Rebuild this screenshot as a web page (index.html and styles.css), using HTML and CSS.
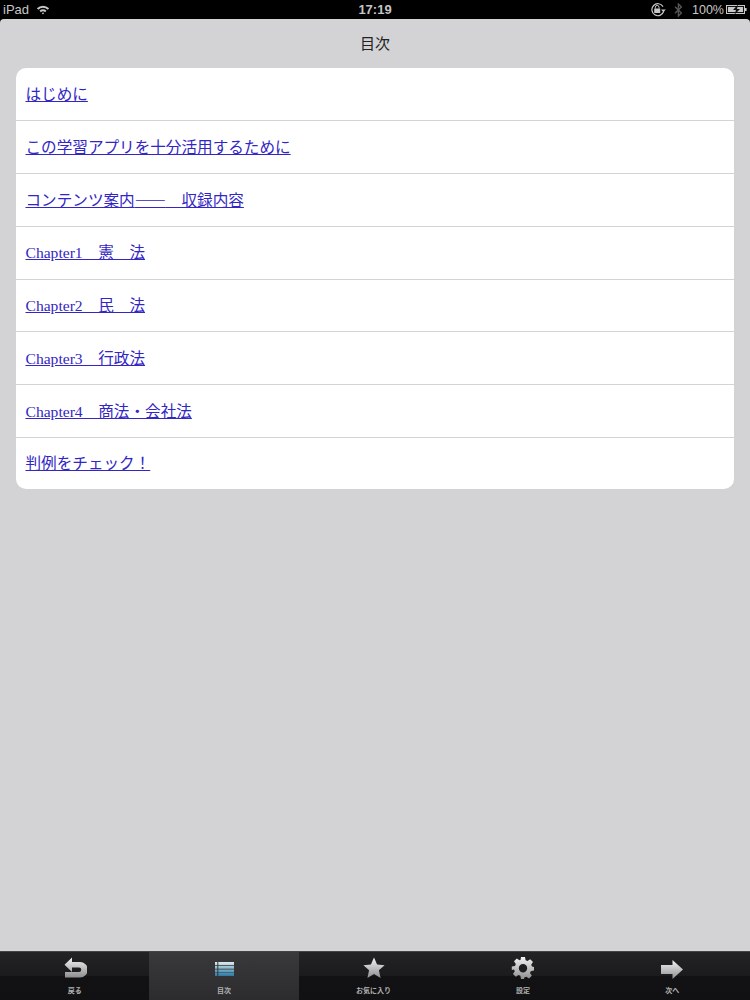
FILE: index.html
```html
<!DOCTYPE html>
<html lang="ja">
<head>
    <meta charset="UTF-8">
    <title>目次</title>
    <link rel="stylesheet" href="styles.css">
</head>
<body>
    <div class="status-bar">
        <div class="status-left">
            <span>iPad</span>
            <svg class="wifi" width="14" height="11" viewBox="0 0 16 12">
                <path d="M1 4.5 A10 10 0 0 1 15 4.5 L13.4 6.2 A7.8 7.8 0 0 0 2.6 6.2 Z" fill="#c8c8c8"/>
                <path d="M4 7.4 A5.8 5.8 0 0 1 12 7.4 L10.4 9 A3.6 3.6 0 0 0 5.6 9 Z" fill="#c8c8c8"/>
                <path d="M6.6 10 A2 2 0 0 1 9.4 10 L8 11.6 Z" fill="#c8c8c8"/>
            </svg>
        </div>
        <div class="status-time">17:19</div>
        <div class="status-right">
            <svg class="lock" width="16" height="15" viewBox="0 0 16 15">
                <path d="M13.6 9.5 A6 6 0 1 1 13 4.6" fill="none" stroke="#c8c8c8" stroke-width="1.2"/>
                <path d="M11 7.5 L15.8 7.5 L13.4 10.2 Z" fill="#c8c8c8"/>
                <rect x="4.2" y="6.5" width="6" height="4.5" fill="#c8c8c8"/>
                <path d="M5.4 6.5 V5.2 A1.8 1.8 0 0 1 9 5.2 V6.5" fill="none" stroke="#c8c8c8" stroke-width="1"/>
            </svg>
            <svg class="bluetooth" width="9" height="14" viewBox="0 0 9 14">
                <path d="M1 3.8 L7.4 10 L4.4 13 V1 L7.4 4 L1 10.2" fill="none" stroke="#555" stroke-width="1.4"/>
            </svg>
            <span class="battery-text">100%</span>
            <svg width="21" height="11" viewBox="0 0 21 11">
                <rect x="0.5" y="1.5" width="18" height="8" fill="#111" stroke="#c8c8c8"/>
                <rect x="2" y="3" width="15" height="5" fill="#c8c8c8"/>
                <path d="M12 0.5 L7 6 H10 L8.5 10.5 L14 5 H11 Z" fill="#111"/>
                <rect x="19" y="4" width="1.6" height="3" fill="#c8c8c8"/>
            </svg>
        </div>
    </div>

    <div class="content">
        <h1 class="title">目次</h1>
        <ul class="toc">
            <li><a href="#">はじめに</a></li>
            <li><a href="#">この学習アプリを十分活用するために</a></li>
            <li><a href="#">コンテンツ案内<span class="dash">――</span>　収録内容</a></li>
            <li><a href="#">Chapter1　憲　法</a></li>
            <li><a href="#">Chapter2　民　法</a></li>
            <li><a href="#">Chapter3　行政法</a></li>
            <li><a href="#">Chapter4　商法・会社法</a></li>
            <li><a href="#">判例をチェック！</a></li>
        </ul>
    </div>

    <div class="tab-bar">
        <div class="tab">
            <svg width="24" height="24" viewBox="0 0 24 24">
                <defs>
                    <linearGradient id="gradBack" x1="0" y1="0" x2="0" y2="1">
                        <stop offset="0" stop-color="#f4f4f4"/>
                        <stop offset="1" stop-color="#8e8e8e"/>
                    </linearGradient>
                </defs>
                <path d="M9 1.5 V6 H17 A6.5 6.5 0 0 1 17 21.5 H2 V16 H16 A1.5 1.5 0 0 0 16 11.5 H9 V16 L1.5 8.7 Z" fill="url(#gradBack)"/>
            </svg>
            <span>戻る</span>
        </div>
        <div class="tab active">
            <svg width="24" height="24" viewBox="0 0 24 24">
                <defs>
                    <linearGradient id="gradList" x1="0" y1="0" x2="0" y2="1">
                        <stop offset="0" stop-color="#e2ecef"/>
                        <stop offset="0.5" stop-color="#7fb0c6"/>
                        <stop offset="1" stop-color="#2a7ba6"/>
                    </linearGradient>
                </defs>
                <path d="M3 6h2.3v3H3zM6.3 6H22v3H6.3zM3 9.7h2.3v3H3zM6.3 9.7H22v3H6.3zM3 13.4h2.3v3H3zM6.3 13.4H22v3H6.3zM3 17h2.3v3H3zM6.3 17H22v3H6.3z" fill="url(#gradList)"/>
            </svg>
            <span>目次</span>
        </div>
        <div class="tab">
            <svg width="24" height="24" viewBox="0 0 24 24">
                <defs>
                    <linearGradient id="gradStar" x1="0" y1="0" x2="0" y2="1">
                        <stop offset="0" stop-color="#f4f4f4"/>
                        <stop offset="1" stop-color="#8e8e8e"/>
                    </linearGradient>
                </defs>
                <path d="M12 1.5 L15.1 8.6 L22.6 9.3 L16.9 14.3 L18.6 22 L12 17.9 L5.4 22 L7.1 14.3 L1.4 9.3 L8.9 8.6 Z" fill="url(#gradStar)"/>
            </svg>
            <span>お気に入り</span>
        </div>
        <div class="tab">
            <svg width="24" height="24" viewBox="0 0 24 24">
                <defs>
                    <linearGradient id="gradGear" x1="0" y1="0" x2="0" y2="1">
                        <stop offset="0" stop-color="#f4f4f4"/>
                        <stop offset="1" stop-color="#8e8e8e"/>
                    </linearGradient>
                </defs>
                <path fill-rule="evenodd" fill="url(#gradGear)" d="M10 1h4l.6 3.2 1.9.8 2.7-1.8 2.8 2.8-1.8 2.7.8 1.9L23 11v3.6l-3.2.6-.8 1.9 1.8 2.7-2.8 2.8-2.7-1.8-1.9.8L13 23h-3l-.6-3.2-1.9-.8-2.7 1.8-2.8-2.8 1.8-2.7-.8-1.9L0.8 14v-3.5l3.2-.6.8-1.9L3 5.3 5.8 2.5l2.7 1.8 1-.4zM12 8a4.2 4.2 0 1 0 0 8.4A4.2 4.2 0 0 0 12 8z"/>
            </svg>
            <span>設定</span>
        </div>
        <div class="tab">
            <svg width="24" height="24" viewBox="0 0 24 24">
                <defs>
                    <linearGradient id="gradNext" x1="0" y1="0" x2="0" y2="1">
                        <stop offset="0" stop-color="#f4f4f4"/>
                        <stop offset="1" stop-color="#8e8e8e"/>
                    </linearGradient>
                </defs>
                <path d="M1 9 H12.5 V4 L23 13.5 L12.5 23 V18 H1 Z" fill="url(#gradNext)"/>
            </svg>
            <span>次へ</span>
        </div>
    </div>
</body>
</html>
```

FILE: styles.css
```css
html, body {
    height: 100%;
}
body {
    margin: 0;
    display: flex;
    flex-direction: column;
    background-color: #000;
    font-family: "Liberation Serif", "Noto Sans CJK JP", serif;
    overflow: hidden;
}
.status-bar {
    height: 19px;
    flex-shrink: 0;
    display: grid;
    grid-template-columns: 1fr auto 1fr;
    align-items: center;
    padding: 0 3px;
    background-color: #000;
    color: #c8c8c8;
    font-family: "Liberation Sans", sans-serif;
    font-size: 13px;
}
.status-left {
    display: flex;
    align-items: center;
    gap: 7px;
}
.status-time {
    font-weight: bold;
    font-size: 13px;
    color: #c4c4c4;
}
.status-right {
    display: flex;
    align-items: center;
    justify-content: flex-end;
    gap: 2px;
}
.lock {
    margin-right: 6px;
}
.bluetooth {
    margin-right: 7px;
}
.battery-text {
    font-size: 12.5px;
}
.content {
    flex: 1;
    padding: 0 16px;
    background-color: #d3d2d5;
    border-radius: 4px 4px 0 0;
}
.title {
    margin: 0;
    height: 49px;
    padding-bottom: 2px;
    box-sizing: border-box;
    line-height: 47px;
    text-align: center;
    font-family: "Noto Sans CJK JP", sans-serif;
    font-size: 15px;
    font-weight: normal;
    color: #222;
}
.toc {
    list-style: none;
    margin: 0;
    padding: 0;
    background-color: #fff;
    border-radius: 10px;
    overflow: hidden;
}
.toc li {
    box-sizing: border-box;
    height: 52.75px;
    padding: 1.5px 0 0 9.5px;
    line-height: 50.25px;
    border-bottom: 1px solid #d4d4d4;
    font-size: 15.6px;
}
.toc li:first-child {
    height: 53.3px;
    padding-top: 1.6px;
}
.toc li:last-child {
    height: 51.7px;
    border-bottom: none;
}
.toc a {
    color: #3226c4;
}
.dash {
    font-family: "Noto Sans CJK JP", sans-serif;
    font-weight: bold;
    line-height: 0;
}
.tab-bar {
    height: 48px;
    flex-shrink: 0;
    display: flex;
    padding-right: 3px;
    border-top: 1px solid #444;
    background: linear-gradient(#232325 0%, #1b1b1d 50%, #121214 51%, #111113 100%);
}
.tab {
    flex: 1;
    display: flex;
    flex-direction: column;
    align-items: center;
    padding-top: 4px;
    color: #b0b0b0;
    font-family: "Noto Sans CJK JP", sans-serif;
    font-size: 7px;
    font-weight: bold;
}
.tab span {
    margin-top: 5px;
}
.tab.active {
    background: linear-gradient(#39393b, #2c2c2e);
}
```
